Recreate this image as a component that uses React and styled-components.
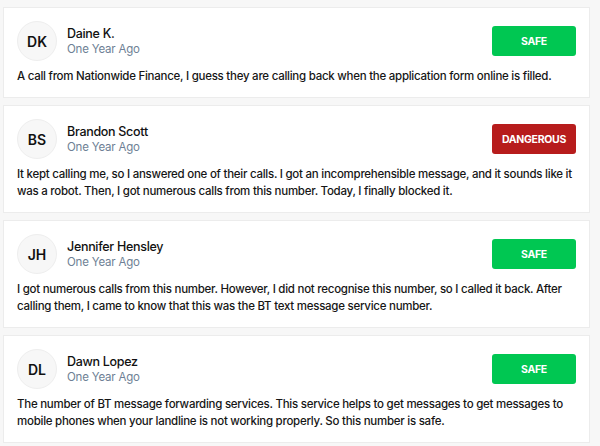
import React from "react";
import styled, { createGlobalStyle } from "styled-components";

const Global = createGlobalStyle`
  html, body { margin: 0; padding: 0; background: #f7f7f7; }
  body { font-family: Inter, "Open Sans", Arial, sans-serif; }
`;

const Page = styled.div`
  display: flex;
  flex-direction: column;
  gap: 7px;
  padding: 7px 10px 0 3px;
`;

const Card = styled.div`
  background: #fff;
  border: 1px solid #ececec;
  padding: 13px 13px 12px 13px;
  display: flex;
  flex-direction: column;
  gap: 7px;
`;

const Header = styled.div`
  display: flex;
  align-items: center;
`;

const Avatar = styled.div`
  width: 38px;
  height: 38px;
  border-radius: 50%;
  background: #f7f7f7;
  border: 1px solid #eeeeee;
  display: flex;
  align-items: center;
  justify-content: center;
  font-size: 14px;
  font-weight: 600;
  color: #111;
  flex-shrink: 0;
`;

const Who = styled.div`
  margin-left: 10px;
  display: flex;
  flex-direction: column;
  gap: 1px;
  flex: 1;
`;

const Name = styled.div`
  font-size: 12.5px;
  font-weight: 500;
  letter-spacing: -0.3px;
  color: #111;
  line-height: 15px;
`;

const When = styled.div`
  font-size: 11.5px;
  letter-spacing: -0.2px;
  color: #6e7f95;
  line-height: 15px;
`;

const Badge = styled.div`
  width: 84px;
  height: 30px;
  border-radius: 3px;
  background: ${(p) => (p.$danger ? "#b71c1c" : "#00c752")};
  color: #fff;
  font-size: 10.5px;
  font-weight: 700;
  letter-spacing: -0.3px;
  display: flex;
  align-items: center;
  justify-content: center;
`;

const Text = styled.p`
  margin: 0;
  font-size: 11.5px;
  letter-spacing: -0.26px;
  line-height: 17px;
  font-weight: 500;
  color: #161616;
`;

const reviews = [
  {
    initials: "DK",
    name: "Daine K.",
    status: "SAFE",
    text: "A call from Nationwide Finance, I guess they are calling back when the application form online is filled.",
  },
  {
    initials: "BS",
    name: "Brandon Scott",
    status: "DANGEROUS",
    text: "It kept calling me, so I answered one of their calls. I got an incomprehensible message, and it sounds like it was a robot. Then, I got numerous calls from this number. Today, I finally blocked it.",
  },
  {
    initials: "JH",
    name: "Jennifer Hensley",
    status: "SAFE",
    text: "I got numerous calls from this number. However, I did not recognise this number, so I called it back. After calling them, I came to know that this was the BT text message service number.",
  },
  {
    initials: "DL",
    name: "Dawn Lopez",
    status: "SAFE",
    text: "The number of BT message forwarding services. This service helps to get messages to get messages to mobile phones when your landline is not working properly. So this number is safe.",
  },
];

export default function App() {
  return (
    <>
      <Global />
      <Page>
        {reviews.map((r) => (
          <Card key={r.name}>
            <Header>
              <Avatar>{r.initials}</Avatar>
              <Who>
                <Name>{r.name}</Name>
                <When>One Year Ago</When>
              </Who>
              <Badge $danger={r.status === "DANGEROUS"}>{r.status}</Badge>
            </Header>
            <Text>{r.text}</Text>
          </Card>
        ))}
      </Page>
    </>
  );
}
